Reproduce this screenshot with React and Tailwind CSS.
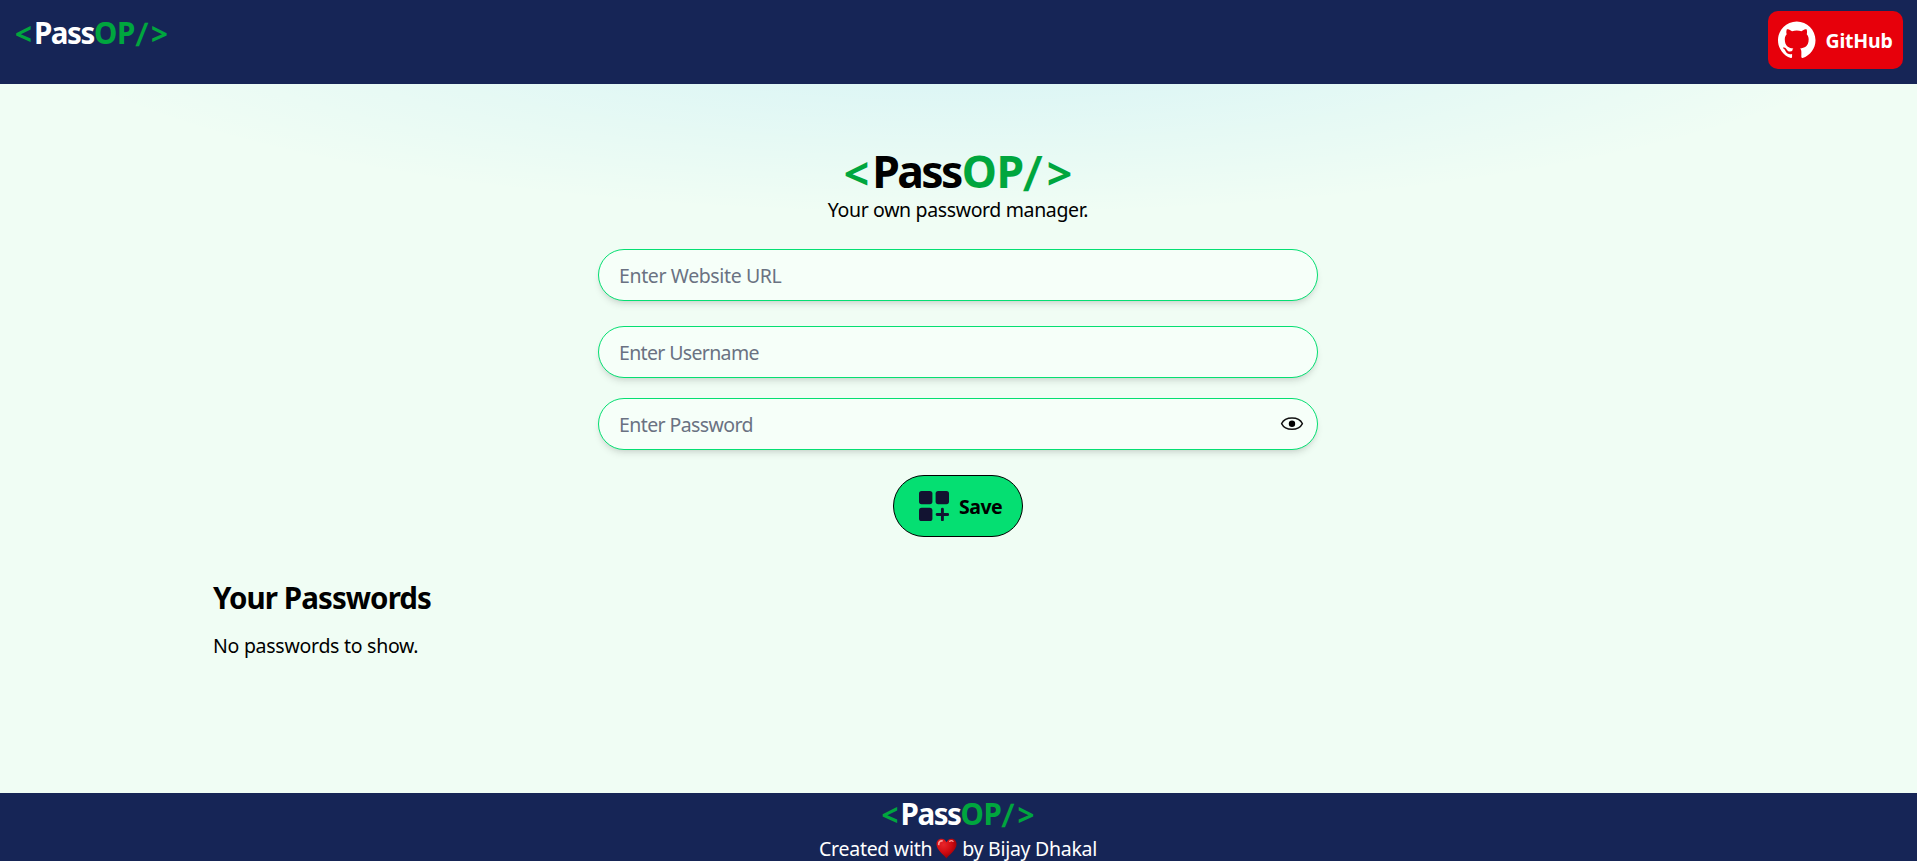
import React from 'react';
import { SiGithub } from 'react-icons/si';

function Logo() {
  return (
    <div className="flex h-10 text-[29.5px] leading-10 font-bold text-green-600">
      <span className="pt-px">&lt;</span>
      <span className="ml-[2px] tracking-[-1.4px] text-white">Pass</span>
      <span className="tracking-[-0.2px]">OP</span>
      <span className="ml-[0.5px] translate-y-[1px] scale-y-110 -skew-x-4 font-semibold">/</span>
      <span className="ml-[3.5px] pt-px">&gt;</span>
    </div>
  );
}

function HeroLogo() {
  return (
    <h1 className="flex h-[49px] text-[44.5px] leading-[50px] font-bold text-green-600">
      <span className="pt-[2px]">&lt;</span>
      <span className="ml-[3px] tracking-[-2.6px] text-black">Pass</span>
      <span className="ml-[1px] tracking-[-0.5px]">OP</span>
      <span className="ml-[0.5px] translate-y-[1px] scale-y-110 -skew-x-4 font-semibold">/</span>
      <span className="ml-[5px] pt-[2px]">&gt;</span>
    </h1>
  );
}

const field =
  'block h-[52px] w-full rounded-full border border-green-400 bg-[#f6fff9] px-5 text-[19.5px] leading-[30px] text-black shadow-[0_5px_7.5px_-1.25px_rgba(0,0,0,0.1),0_2.5px_5px_-2.5px_rgba(0,0,0,0.1)] outline-none placeholder:text-gray-500';

function EyeIcon() {
  return (
    <svg className="absolute top-[18px] right-[14px] h-[15px] w-6" viewBox="0 0 24 15" fill="none">
      <path
        d="M1.6 7.6C3.5 3.7 7.4 2 12 2s8.500 1.700 10.400 5.600C20.500 11.500 16.600 13.300 12 13.300S3.500 11.500 1.600 7.600Z"
        stroke="#111"
        strokeWidth="1.4"
      />
      <circle cx="12" cy="7.700" r="3.200" fill="#000" />
    </svg>
  );
}

function AddIcon() {
  return (
    <svg className="h-[30px] w-[30px]" viewBox="0 0 30 30" fill="#121331">
      <rect x="0" y="0" width="13.400" height="13.200" rx="2.600" />
      <rect x="16.600" y="0" width="13.400" height="13.200" rx="2.600" />
      <rect x="0" y="16.800" width="13.400" height="13.200" rx="2.600" />
      <path d="M23.400 18.200v10.600M18.100 23.500h10.600" stroke="#121331" strokeWidth="2.900" strokeLinecap="round" />
    </svg>
  );
}

function Heart() {
  return (
    <svg className="mt-1 h-[21px] w-[21px]" viewBox="0 0 20 20">
      <defs>
        <radialGradient id="heart" cx="0.35" cy="0.3" r="0.75">
          <stop offset="0" stopColor="#e8252a" />
          <stop offset="0.55" stopColor="#cf0a10" />
          <stop offset="1" stopColor="#8f0006" />
        </radialGradient>
      </defs>
      <path
        d="M10 19.500C8.300 16.600 0.400 12 0.400 5.800C0.400 2.600 2.500 0.600 5.200 0.600C7.500 0.600 9.200 2 10 4C10.800 2 12.500 0.600 14.800 0.600C17.500 0.600 19.600 2.600 19.600 5.800C19.600 12 11.700 16.600 10 19.500Z"
        fill="url(#heart)"
      />
      <path d="M2.600 6.200C2.500 3.800 4 2.500 5.800 2.700" stroke="#ff9a96" strokeWidth="1.600" strokeLinecap="round" fill="none" />
      <path d="M13 3.200C14 2.400 15.400 2.400 16.200 3.200" stroke="#ff9a96" strokeWidth="1.300" strokeLinecap="round" fill="none" />
    </svg>
  );
}

export default function App() {
  return (
    <div className="flex h-[861px] w-full flex-col overflow-hidden bg-green-50 bg-[radial-gradient(100%_50%_at_50%_0%,rgba(0,163,255,0.13)_0,rgba(0,163,255,0)_50%,rgba(0,163,255,0)_100%)] font-['Noto_Sans','Open_Sans',sans-serif] text-[19.5px] leading-[30px] text-black">
      <header className="flex h-[84px] shrink-0 items-start justify-between bg-blue-950 pr-[14px] pl-[15px]">
        <div className="pt-[13px]">
          <Logo />
        </div>
        <button className="mt-[11px] flex h-[58px] w-[135px] items-center gap-[10px] rounded-[10px] bg-red-600 pl-[10px] font-bold text-white">
          <SiGithub className="h-[37.5px] w-[37.5px] shrink-0" />
          <span className="pt-[2px] tracking-[-0.2px]">GitHub</span>
        </button>
      </header>

      <main className="flex flex-1 flex-col pt-[62px]">
        <div className="flex flex-col items-center pr-px">
          <HeroLogo />
          <p className="tracking-[-0.36px]">Your own password manager.</p>
        </div>
        <div className="mt-[24px] mr-auto ml-[598px] flex w-[720px] flex-col items-center">
          <input className={field + ' tracking-[-0.38px]'} placeholder="Enter Website URL" />
          <input className={field + ' mt-[25px] tracking-[-0.65px]'} placeholder="Enter Username" />
          <div className="relative mt-5 w-full">
            <input className={field + ' tracking-[-0.6px]'} type="password" placeholder="Enter Password" />
            <EyeIcon />
          </div>
          <button className="mt-[25px] flex h-[62px] w-[130px] items-center gap-[10px] rounded-full border border-black bg-green-400 pl-[25px] font-bold">
            <AddIcon />
            <span className="pt-[2px] tracking-[-0.5px]">Save</span>
          </button>
        </div>
        <section className="mt-[41px] px-[213px]">
          <h2 className="text-[29.5px] leading-10 font-bold tracking-[-0.92px]">Your Passwords</h2>
          <p className="mt-[13px] tracking-[-0.27px]">No passwords to show.</p>
        </section>
      </main>

      <footer className="flex h-[68px] shrink-0 flex-col items-center bg-blue-950 pt-px pr-px text-white">
        <Logo />
        <div className="flex h-[30px]">
          <span className="tracking-[-0.28px]">Created with</span>
          <span className="mr-[5px] ml-[4px]">
            <Heart />
          </span>
          <span className="tracking-[-0.28px]">by Bijay Dhakal</span>
        </div>
      </footer>
    </div>
  );
}
